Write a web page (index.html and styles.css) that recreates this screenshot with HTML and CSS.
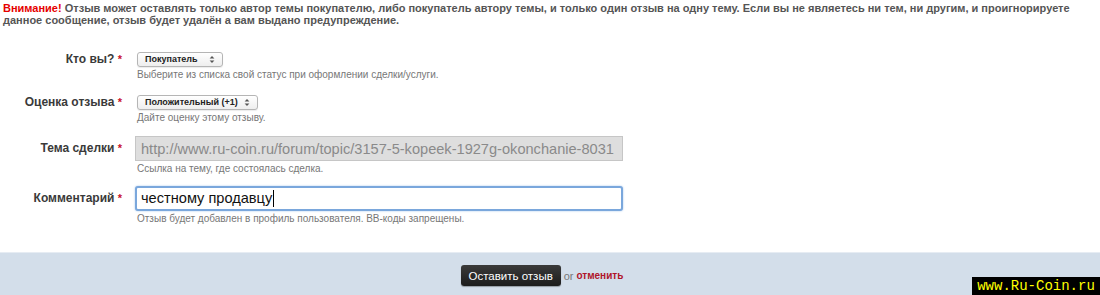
FILE: index.html
```html
<!DOCTYPE html>
<html lang="ru">
<head>
    <meta charset="UTF-8">
    <title>Оставить отзыв</title>
    <link rel="stylesheet" href="styles.css">
</head>
<body>
    <div class="page">
        <p class="notice"><span class="attention">Внимание!</span> <span>Отзыв может оставлять только автор темы покупателю, либо покупатель автору темы, и только один отзыв на одну тему. Если вы не являетесь ни тем, ни другим, и проигнорируете данное сообщение, отзыв будет удалён а вам выдано предупреждение.</span></p>

        <form class="feedback-form">
            <div class="row">
                <label class="row-label">Кто вы? <span class="req">*</span></label>
                <div class="row-field">
                    <div class="select-box select-who">
                        <select>
                            <option>Покупатель</option>
                            <option>Продавец</option>
                        </select>
                        <svg class="select-arrows" width="6" height="9" viewBox="0 0 6 9"><path d="M0.6 3.6 L3 1 L5.4 3.6 Z M0.6 5.4 L3 8 L5.4 5.4 Z" fill="#555"/></svg>
                    </div>
                    <p class="help">Выберите из списка свой статус при оформлении сделки/услуги.</p>
                </div>
            </div>

            <div class="row row-rate">
                <label class="row-label">Оценка отзыва <span class="req">*</span></label>
                <div class="row-field">
                    <div class="select-box select-rate">
                        <select>
                            <option>Положительный (+1)</option>
                            <option>Нейтральный (0)</option>
                            <option>Отрицательный (-1)</option>
                        </select>
                        <svg class="select-arrows" width="6" height="9" viewBox="0 0 6 9"><path d="M0.6 3.6 L3 1 L5.4 3.6 Z M0.6 5.4 L3 8 L5.4 5.4 Z" fill="#555"/></svg>
                    </div>
                    <p class="help">Дайте оценку этому отзыву.</p>
                </div>
            </div>

            <div class="row row-input">
                <label class="row-label">Тема сделки <span class="req">*</span></label>
                <div class="row-field">
                    <input class="text-input" type="text" value="http://www.ru-coin.ru/forum/topic/3157-5-kopeek-1927g-okonchanie-8031" disabled>
                    <p class="help">Ссылка на тему, где состоялась сделка.</p>
                </div>
            </div>

            <div class="row row-input">
                <label class="row-label">Комментарий <span class="req">*</span></label>
                <div class="row-field">
                    <div class="text-input focused">честному продавцу<span class="caret"></span></div>
                    <p class="help">Отзыв будет добавлен в профиль пользователя. BB-коды запрещены.</p>
                </div>
            </div>
        </form>

        <div class="form-footer">
            <button class="submit-btn" type="button">Оставить отзыв</button>
            <span class="or">or</span>
            <a class="cancel" href="#">отменить</a>
        </div>

        <div class="watermark">www.Ru-Coin.ru</div>
    </div>
</body>
</html>
```

FILE: styles.css
```css
body {
    margin: 0;
    background: #ffffff;
    font-family: "Liberation Sans", Arial, sans-serif;
}
.page {
    position: relative;
    width: 1100px;
    height: 295px;
    overflow: hidden;
}
.notice {
    margin: 0;
    padding: 2px 4px 0 3px;
    font-size: 11px;
    line-height: 12px;
    font-weight: bold;
    color: #555555;
}
.attention {
    color: #e60000;
}
.feedback-form {
    padding-top: 26px;
}
.row {
    display: flex;
    margin-bottom: 14px;
}
.row-rate {
    margin-bottom: 12px;
}
.row-input {
    margin-bottom: 11px;
}
.row-label {
    width: 122px;
    padding-right: 15px;
    text-align: right;
    font-size: 12px;
    font-weight: bold;
    line-height: 15px;
    color: #3a3a3a;
}
.row-input .row-label {
    line-height: 25px;
}
.req {
    color: #c8102e;
    font-size: 11px;
}
.row-field {
    display: flex;
    flex-direction: column;
    align-items: flex-start;
}
.select-box {
    position: relative;
    height: 13px;
    border: 1px solid #b5b5b5;
    border-radius: 3px;
    background: linear-gradient(#ffffff, #eeeeee);
    box-shadow: 0 1px 1px rgba(0, 0, 0, 0.08);
}
.select-box select {
    appearance: none;
    -webkit-appearance: none;
    display: block;
    width: 100%;
    height: 13px;
    margin: 0;
    border: none;
    background: transparent;
    padding: 0 14px 0 7px;
    font-family: "Liberation Sans", Arial, sans-serif;
    font-size: 9px;
    line-height: 13px;
    font-weight: bold;
    color: #222222;
    outline: none;
}
.select-who {
    width: 84px;
}
.select-rate {
    width: 119px;
}
.select-arrows {
    position: absolute;
    right: 7px;
    top: 2px;
}
.help {
    margin: 1px 0 0 0;
    font-size: 10px;
    line-height: 13px;
    color: #777777;
}
.text-input {
    box-sizing: border-box;
    width: 488px;
    height: 25px;
    margin-left: -2px;
    padding: 0 5px;
    font-family: "Liberation Sans", Arial, sans-serif;
    font-size: 14.6px;
    line-height: 23px;
    border: 1px solid #c6c6c6;
    background: #ffffff;
    color: #111111;
}
.text-input:disabled {
    background: #dedede;
    color: #8a8a8a;
    -webkit-text-fill-color: #8a8a8a;
    opacity: 1;
}
.text-input.focused {
    border: 2px solid #7aa7dc;
    border-radius: 3px;
    line-height: 21px;
    padding: 0 4px;
    box-shadow: 0 0 2px #9dc0ea;
}
.caret {
    display: inline-block;
    width: 1px;
    height: 17px;
    margin-left: 1px;
    vertical-align: -4px;
    background: #000000;
}
.form-footer {
    margin-top: 27px;
    height: 39px;
    border-top: 1px solid #e6ecf3;
    background: #d3deea;
    display: flex;
    align-items: center;
    justify-content: center;
    padding-right: 16px;
    padding-top: 3px;
}
.submit-btn {
    width: 100px;
    height: 21px;
    border: none;
    border-radius: 3px;
    background: linear-gradient(#3a3a3a, #1c1c1c);
    color: #ffffff;
    font-family: "Liberation Sans", Arial, sans-serif;
    font-size: 11.5px;
    box-shadow: 0 1px 1px rgba(0, 0, 0, 0.3);
}
.or {
    margin-left: 3px;
    font-size: 11px;
    color: #777777;
}
.cancel {
    margin-left: 3px;
    font-size: 10px;
    font-weight: bold;
    color: #b0152a;
    text-decoration: none;
}
.watermark {
    position: absolute;
    right: 0;
    bottom: 0;
    width: 128px;
    height: 18px;
    background: #000000;
    color: #ffff00;
    font-family: "Liberation Mono", "DejaVu Sans Mono", monospace;
    font-size: 14px;
    line-height: 18px;
    text-align: center;
}
```
